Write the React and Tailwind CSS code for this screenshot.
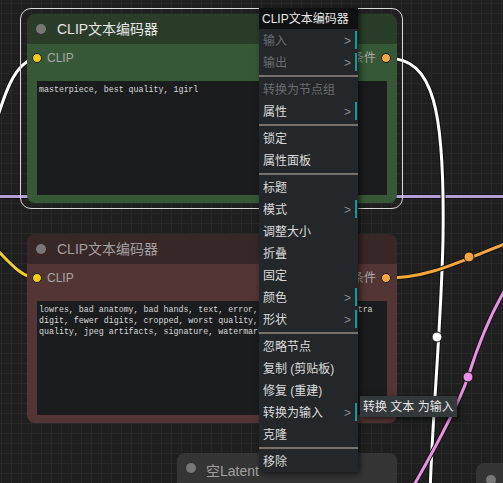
import React from "react";

const sans = { fontFamily: '"Liberation Sans", "Noto Sans CJK SC", sans-serif' };

function MenuItem({ label, disabled, sub }) {
  return (
    <div className="relative h-[22px] flex items-center pl-[4px] pr-[6px] pt-[2px]">
      <span className={disabled ? "text-[#6a6d70]" : "text-[#dcdcdc]"}>{label}</span>
      {sub && (
        <>
          <span className="absolute right-[7px] top-[3px] text-[12px] text-[#8a8d90]">&gt;</span>
          <span className="absolute right-[1px] top-[2px] bottom-[2px] w-[2px] bg-[#17999a]" />
        </>
      )}
    </div>
  );
}

function Sep() {
  return (
    <div className="h-[5px] flex items-center">
      <div className="h-[2px] w-full bg-[#76726b]" />
    </div>
  );
}

function ContextMenu() {
  return (
    <div
      className="absolute left-[259px] top-[8px] w-[99px] bg-[#23272a] text-[12px] shadow-[2px_2px_6px_rgba(0,0,0,0.6)]"
      style={sans}
    >
      <div className="h-[21px] bg-[#0f1011] text-[#e8e8e8] flex items-center pl-[3px]">CLIP文本编码器</div>
      <MenuItem label="输入" disabled sub />
      <MenuItem label="输出" disabled sub />
      <Sep />
      <MenuItem label="转换为节点组" disabled />
      <MenuItem label="属性" sub />
      <Sep />
      <MenuItem label="锁定" />
      <MenuItem label="属性面板" />
      <Sep />
      <MenuItem label="标题" />
      <MenuItem label="模式" sub />
      <MenuItem label="调整大小" />
      <MenuItem label="折叠" />
      <MenuItem label="固定" />
      <MenuItem label="颜色" sub />
      <MenuItem label="形状" sub />
      <Sep />
      <MenuItem label="忽略节点" />
      <MenuItem label="复制 (剪贴板)" />
      <MenuItem label="修复 (重建)" />
      <MenuItem label="转换为输入" sub />
      <MenuItem label="克隆" />
      <Sep />
      <MenuItem label="移除" />
    </div>
  );
}

function ClipNode({ top, titleBg, bodyBg, titleColor, lines }) {
  return (
    <div className="absolute left-[27px] w-[370px] rounded-[8px] overflow-hidden" style={{ top }}>
      <div className={`h-[30px] flex items-center pl-[9px] ${titleBg}`} style={sans}>
        <span className="w-[10px] h-[10px] rounded-full bg-[#777777]" />
        <span className={`ml-[11px] text-[14px] ${titleColor}`}>CLIP文本编码器</span>
      </div>
      <div className={`${bodyBg} h-[159px] flex flex-col`}>
        <div className="h-[28px] flex items-center justify-between pl-[5px] pr-[6px]" style={sans}>
          <div className="flex items-center">
            <span className="w-[8px] h-[8px] rounded-full bg-[#f5d000] border border-[#1a1a1a] box-content" />
            <span className="ml-[5px] text-[12px] text-[#a8a8a8]">CLIP</span>
          </div>
          <div className="flex items-center">
            <span className="text-[12px] text-[#a8a8a8]">条件</span>
            <span className="ml-[5px] w-[8px] h-[8px] rounded-full bg-[#f5a73b] border border-[#1a1a1a] box-content" />
          </div>
        </div>
        <div className="ml-[10px] mt-[9px] w-[350px] h-[114px] bg-[#1b1c1e] pt-[3px] pl-[2px]">
          {lines.map((l, i) => (
            <div
              key={i}
              className="text-[8.3px] leading-[11px] text-[#d8d8d8] whitespace-pre"
              style={{ fontFamily: '"Liberation Mono", "DejaVu Sans Mono", monospace' }}
            >
              {l}
            </div>
          ))}
        </div>
      </div>
    </div>
  );
}

function Links() {
  return (
    <svg className="absolute inset-0" width="503" height="483" viewBox="0 0 503 483">
      <defs>
        <pattern id="grid" width="10" height="10" patternUnits="userSpaceOnUse" x="1" y="3">
          <rect width="10" height="10" fill="#1f1f1f" />
          <path d="M0 0.5 H10 M0.5 0 V10" stroke="#282828" strokeWidth="1" />
        </pattern>
      </defs>
      <rect width="503" height="483" fill="url(#grid)" />
      <g fill="none" strokeLinecap="round">
        <path d="M0 196.5 H503" stroke="#111" strokeWidth="5" />
        <path d="M0 196.5 H503" stroke="#b49ed8" strokeWidth="3" />
        <path d="M-8 135 C 4 95, 14 62, 36 58" stroke="#111" strokeWidth="5" />
        <path d="M-8 135 C 4 95, 14 62, 36 58" stroke="#ffffff" strokeWidth="3" />
        <path d="M-10 243 C 10 262, 20 277, 36 278" stroke="#111" strokeWidth="5" />
        <path d="M-10 243 C 10 262, 20 277, 36 278" stroke="#f2d21b" strokeWidth="3" />
        <path d="M387 58 C 434 58, 445 110, 443 240 C 441 330, 432 420, 430 495" stroke="#111" strokeWidth="5" />
        <path d="M387 58 C 434 58, 445 110, 443 240 C 441 330, 432 420, 430 495" stroke="#ffffff" strokeWidth="3" />
        <path d="M387 278 C 430 278, 460 261, 510 242" stroke="#111" strokeWidth="5" />
        <path d="M387 278 C 430 278, 460 261, 510 242" stroke="#f5a73b" strokeWidth="3" />
        <path d="M410 492 C 440 440, 460 400, 468 377 C 478 345, 490 315, 506 288" stroke="#111" strokeWidth="5" />
        <path d="M410 492 C 440 440, 460 400, 468 377 C 478 345, 490 315, 506 288" stroke="#ea8fe6" strokeWidth="3" />
      </g>
      <circle cx="437" cy="337" r="5" fill="#ffffff" stroke="#111" strokeWidth="1" />
      <circle cx="469" cy="257" r="5" fill="#f5a73b" stroke="#111" strokeWidth="1" />
      <circle cx="468" cy="377" r="5" fill="#ea8fe6" stroke="#111" strokeWidth="1" />
    </svg>
  );
}

export default function App() {
  return (
    <div className="relative w-[503px] h-[483px] overflow-hidden bg-[#1f1f1f]">
      <Links />
      <div className="absolute left-[20px] top-[8px] w-[383px] h-[201px] rounded-[11px] border border-[#d8d8d8]" />
      <ClipNode
        top={14}
        titleBg="bg-[#293d29]"
        bodyBg="bg-[#365836]"
        titleColor="text-[#e6e6e6]"
        lines={["masterpiece, best quality, 1girl"]}
      />
      <ClipNode
        top={234}
        titleBg="bg-[#382727]"
        bodyBg="bg-[#533535]"
        titleColor="text-[#a0a0a0]"
        lines={[
          "lowres, bad anatomy, bad hands, text, error, missing fingers, extra",
          "digit, fewer digits, cropped, worst quality, low quality, normal",
          "quality, jpeg artifacts, signature, watermark, username, blurry",
        ]}
      />
      <div className="absolute left-[177px] top-[453px] w-[220px] h-[40px] rounded-[8px] bg-[#353535] flex items-start pt-[8px] pl-[9px]" style={sans}>
        <span className="w-[10px] h-[10px] mt-[2px] rounded-full bg-[#777777]" />
        <span className="ml-[10px] text-[14px] text-[#a0a0a0]">空Latent</span>
      </div>
      <div className="absolute left-[476px] top-[463px] w-[60px] h-[40px] rounded-[8px] bg-[#353535] pt-[12px] pl-[10px]">
        <span className="block w-[10px] h-[10px] rounded-full bg-[#777777]" />
      </div>
      <ContextMenu />
      <div
        className="absolute left-[360px] top-[396px] w-[97px] h-[21px] bg-[#33383b] text-[12px] text-[#e6e6e6] flex items-center pl-[3px] shadow-[2px_2px_6px_rgba(0,0,0,0.6)]"
        style={sans}
      >
        转换 文本 为输入
      </div>
    </div>
  );
}
